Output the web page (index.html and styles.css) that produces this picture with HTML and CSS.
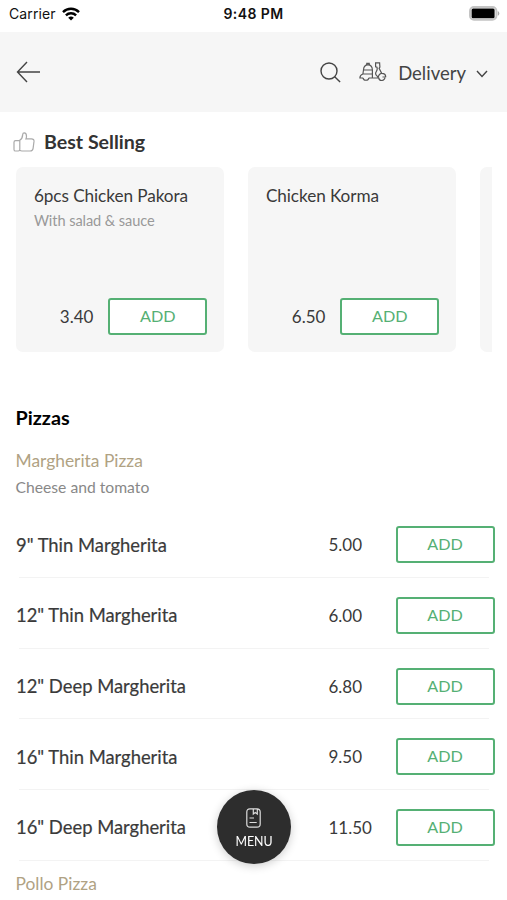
FILE: index.html
```html
<!DOCTYPE html>
<html lang="en">
<head>
<meta charset="utf-8">
<title>Menu</title>
<link rel="stylesheet" href="styles.css">
</head>
<body>
<div class="status">
  <div class="carrier">Carrier
    <svg width="18" height="14" viewBox="0 0 18 14"><g fill="none" stroke="#000" stroke-width="2.4"><path d="M1 5.1a11.3 11.3 0 0 1 16 0"/><path d="M3.9 8.3a7.2 7.2 0 0 1 10.2 0"/></g><path d="M9 13.6 6.2 10.8a4 4 0 0 1 5.6 0z"/></svg>
  </div>
  <div class="time">9:48 PM</div>
  <svg class="battery" width="31" height="15" viewBox="0 0 31 15"><rect x="1" y="1" width="26.400" height="12.800" rx="4" fill="#fff" stroke="#c4c4c4" stroke-width="2"/><rect x="2.6" y="2.4" width="23" height="9.8" rx="1.500"/><path d="M28.800 5v4.800q1.500-.7 1.500-2.400T28.800 5z" fill="#aaa"/></svg>
</div>
<header class="bar">
  <svg class="back" width="25" height="22" viewBox="0 0 25 22"><path d="M24 11H1.500M11 1 1.500 11 11 21"/></svg>
  <svg class="search" width="21" height="21" viewBox="0 0 21 21"><circle cx="9" cy="9" r="8"/><path d="m14.700 14.700 5.400 5.400"/></svg>
  <svg class="scooter" width="28" height="20" viewBox="0 0 28 20"><path d="M4.500 8C4.600 4.600 6.300 2.800 9 2.800s4.300 1.800 4.400 5.200zM7.800 2.800V1.400h2.400v1.400M4.500 8l-.6 4M13.400 8v7.500M3.900 12h9.500M3.900 12C2 12.600.9 13.900.9 16H4M9.900 16h9.300c0-2.400 1.200-3.900 3.200-4.600M19.200 16c0-2-2.600-2.400-2.600-4.600 0-1.500 1.800-2.600 1.600-4.600l-.2-1.600-1.400-.4V.9h4l.3 4.300-.8 1.200 2.600 5c2.600.1 4 1.500 4 3.400l-3.200.2"/><path d="M4 15.800a3 3 0 0 0 5.900 0M19.700 15.600a3.100 3.100 0 1 0 6.200-.4"/></svg>
  <span class="mode">Delivery</span>
  <svg class="chev" width="12" height="8" viewBox="0 0 12 8"><path d="m1 1 5 5.500L11 1"/></svg>
</header>
<main>
  <h2 class="best"><svg width="22" height="20" viewBox="0 0 22 20"><path d="M6.800 8.600v9q0 1.400-1.400 1.400H2.600Q1 19 1 17.400v-7.200q0-1.600 1.600-1.600h3.800q3.100-1.800 3.300-6Q9.800.8 11.200.8q2.300 0 2.300 3.400 0 1.500-.6 2.700h5.500q2.800 0 2.600 2.500l-.9 7Q19.800 19 17.200 19H9q-1.500 0-2.200-1"/></svg>Best Selling</h2>
  <div class="cards">
    <article class="card"><h3>6pcs Chicken Pakora</h3><p>With salad &amp; sauce</p><div class="buy"><span>3.40</span><button class="add">ADD</button></div></article>
    <article class="card"><h3>Chicken Korma</h3><div class="buy"><span>6.50</span><button class="add">ADD</button></div></article>
    <article class="card"></article>
  </div>
  <h2 class="cat">Pizzas</h2>
  <h3 class="item">Margherita Pizza</h3>
  <p class="desc">Cheese and tomato</p>
  <div class="rows">
    <div class="row"><span class="name">9" Thin Margherita</span><span class="price">5.00</span><button class="add">ADD</button></div>
    <div class="row"><span class="name">12" Thin Margherita</span><span class="price">6.00</span><button class="add">ADD</button></div>
    <div class="row"><span class="name">12" Deep Margherita</span><span class="price">6.80</span><button class="add">ADD</button></div>
    <div class="row"><span class="name">16" Thin Margherita</span><span class="price">9.50</span><button class="add">ADD</button></div>
    <div class="row"><span class="name">16" Deep Margherita</span><span class="price">11.50</span><button class="add">ADD</button></div>
  </div>
  <h3 class="item next">Pollo Pizza</h3>
</main>
<button class="menu"><svg width="15" height="20" viewBox="0 0 15 20"><path d="M4 .8h7q3.200 0 3.200 3.200v12q0 3.200-3.200 3.200H4Q.8 19.200.8 16V4Q.8.800 4 .8zM7.300 1v5l2-1.400 2 1.400V1M3.500 10H8M3.500 14.500h7.200"/></svg>MENU</button>
</body>
</html>
```
FILE: styles.css
```css
* { box-sizing: border-box; }
body { margin: 0; height: 900px; overflow: hidden; background: #fff; color: #3a3a3a; font-family: Lato, sans-serif; }
h2, h3, p { margin: 0; font-weight: 400; }
svg { flex: none; }
.status { height: 32px; display: grid; grid-template-columns: 1fr auto 1fr; padding: 0 7px 0 9px; font-family: Inter, sans-serif; line-height: 28px; color: #111; }
.carrier { display: flex; align-items: center; gap: 6px; height: 27px; font-size: 14px; letter-spacing: .1px; }
.time { font-size: 14px; font-weight: 600; letter-spacing: .4px; margin-left: -2px; }
.battery { justify-self: end; margin-top: 6px; }
.bar { height: 80px; background: #f6f6f6; display: flex; align-items: center; padding: 0 19px 0 16px; }
.bar svg { fill: none; stroke: #444; stroke-width: 1.4; }
.search { margin-left: auto; }
.bar .scooter { margin-left: 18px; stroke-width: 1.2; stroke: #555; }
.mode { margin-left: 11px; font-size: 18.5px; line-height: 24px; padding-top: 1px; color: #444; }
.chev { margin: 3px 0 0 10px; }
.best { height: 24px; margin: 18px 0 0 13px; display: flex; align-items: center; gap: 9px; font-size: 19.6px; line-height: 24px; font-weight: 700; color: #333; }
.best svg { fill: none; stroke: #aaa; stroke-width: 1.2; }
.cards { display: flex; gap: 24px; margin: 13px 15px 0 16.4px; overflow: hidden; }
.card { flex: 0 0 208px; height: 185px; padding: 17px 17px 17px 17.5px; background: #f6f6f6; border-radius: 7px; display: flex; flex-direction: column; }
.card h3 { font-size: 17.2px; line-height: 24px; letter-spacing: -.08px; }
.card p { font-size: 14.6px; line-height: 22px; letter-spacing: -.08px; margin-top: 2px; color: #999; }
.buy { margin-top: auto; display: flex; justify-content: flex-end; align-items: center; gap: 15px; font-size: 17px; line-height: 22px; }
.buy span { padding-top: 1px; }
.add { width: 99px; height: 37px; padding: 0 0 2px; border: 2px solid #55b074; border-radius: 3px; background: #fff; color: #55b074; font: 16.2px Lato, sans-serif; }
.cat { margin: 53px 0 0 15.5px; font-size: 19.8px; line-height: 24px; font-weight: 700; color: #000; }
.item { margin: 20px 0 0 15.5px; font-size: 17.4px; line-height: 24px; color: #b0a283; }
.desc { margin: 3px 0 0 15.5px; font-size: 15.7px; line-height: 22px; color: #888; }
.rows { margin-top: 9.6px; }
.row { height: 70.6px; margin: 0 18px 0 19px; padding-top: 5px; display: grid; grid-template-columns: 309.5px 67px 99px; align-items: center; border-bottom: 1px solid #f3f3f3; font-size: 17px; line-height: 22px; }
.price { padding-top: 1px; }
.name { margin-left: -3px; font-size: 18.4px; -webkit-text-stroke: .2px #3a3a3a; }
.item.next { margin-top: 11.6px; }
.menu { position: fixed; left: 217px; top: 790px; width: 74px; height: 74px; border: 0; border-radius: 50%; background: #2d2d2d; color: #fff; box-shadow: 0 2px 10px rgba(0,0,0,.2); display: flex; flex-direction: column; align-items: center; gap: 6px; padding: 18px 0 0; font: 12.4px/16px Lato, sans-serif; }
.menu svg { fill: none; stroke: #ddd; stroke-width: 1.2; margin-left: -1px; }
```
